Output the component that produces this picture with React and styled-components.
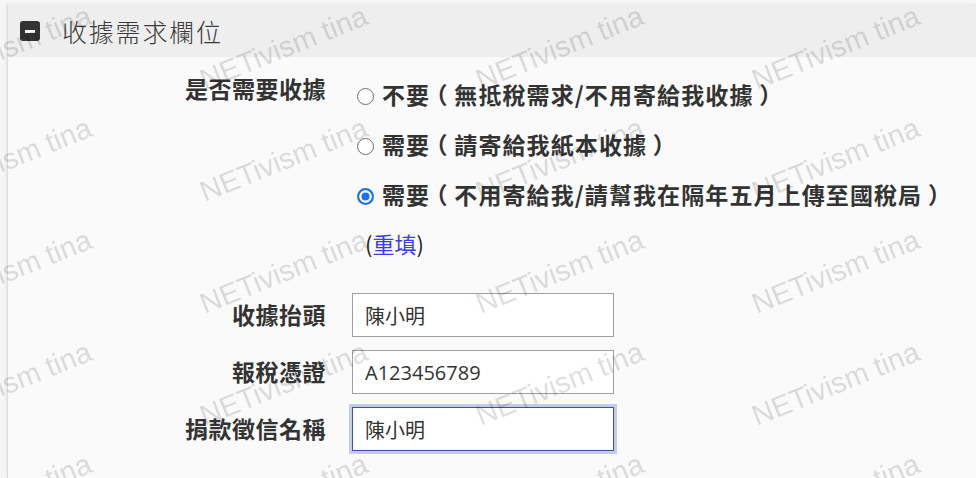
import styled, { createGlobalStyle } from "styled-components";

const GlobalStyle = createGlobalStyle`
  html, body {
    margin: 0;
    background: #f6f6f6;
  }
  * {
    box-sizing: border-box;
  }
`;

const receiptOptions = [
  { id: "none", text: "不要（無抵稅需求/不用寄給我收據）" },
  { id: "paper", text: "需要（請寄給我紙本收據）" },
  { id: "online", text: "需要（不用寄給我/請幫我在隔年五月上傳至國稅局）", checked: true },
];

const textFields = [
  { label: "收據抬頭", value: "陳小明" },
  { label: "報稅憑證", value: "A123456789" },
  { label: "捐款徵信名稱", value: "陳小明", focused: true },
];

// fullwidth brackets drawn centred in their cell, as the Taiwanese fonts do
const withCenteredBrackets = (text) =>
  text
    .split(/([（）])/)
    .map((part, i) =>
      part === "（" || part === "）" ? <Bracket key={i}>{part}</Bracket> : part
    );

const App = () => {
  const marks = Array.from({ length: 20 });

  return (
    <Page>
      <GlobalStyle />
      <Panel>
        <PanelHeader>
          <CollapseIcon />
          <PanelTitle>收據需求欄位</PanelTitle>
        </PanelHeader>

        <PanelBody>
          <FieldRow>
            <FieldLabel $tall>是否需要收據</FieldLabel>
            <RadioList>
              {receiptOptions.map((option) => (
                <RadioOption key={option.id}>
                  <Radio
                    type="radio"
                    name="receipt"
                    defaultChecked={option.checked}
                  />
                  <span>{withCenteredBrackets(option.text)}</span>
                </RadioOption>
              ))}
              <ResetLine>
                (<ResetLink href="#">重填</ResetLink>)
              </ResetLine>
            </RadioList>
          </FieldRow>

          <InputList>
            {textFields.map((field) => (
              <FieldRow key={field.label} $center>
                <FieldLabel>{field.label}</FieldLabel>
                <TextInput
                  type="text"
                  defaultValue={field.value}
                  $focused={field.focused}
                />
              </FieldRow>
            ))}
          </InputList>
        </PanelBody>
      </Panel>

      <Watermark>
        <MarkGrid>
          {marks.map((_, i) => (
            <Mark key={i}>NETivism tina</Mark>
          ))}
        </MarkGrid>
      </Watermark>
    </Page>
  );
};

const Page = styled.div`
  position: relative;
  min-height: 478px;
  overflow: hidden;
  padding: 4px 0 0 7px;
`;

const Panel = styled.section`
  background: #fafafa;
  border-left: 1px solid #dcdcdc;
  box-shadow: -1px 0 3px rgba(0, 0, 0, 0.06);
  min-height: 474px;
`;

const PanelHeader = styled.header`
  display: flex;
  align-items: center;
  gap: 22px;
  height: 53px;
  padding-left: 12px;
  background: #eeeeee;
`;

const CollapseIcon = styled.span`
  position: relative;
  width: 20px;
  height: 20px;
  border-radius: 3px;
  background: #333;

  &::after {
    content: "";
    position: absolute;
    left: 5px;
    top: 9px;
    width: 10px;
    height: 3px;
    background: #fff;
  }
`;

const PanelTitle = styled.h3`
  margin: 0;
  font-family: "Noto Sans CJK TC", "Noto Sans", sans-serif;
  font-size: 25px;
  font-weight: 300;
  letter-spacing: 1.8px;
  color: #3a3a3a;
`;

const PanelBody = styled.div`
  padding-top: 12px;
  display: flex;
  flex-direction: column;
  gap: 26px;
`;

const FieldRow = styled.div`
  display: grid;
  grid-template-columns: 318px 1fr;
  column-gap: 26px;
  align-items: ${({ $center }) => ($center ? "center" : "start")};
`;

const FieldLabel = styled.label`
  text-align: right;
  font-family: "Noto Sans CJK TC", "Noto Sans", sans-serif;
  font-size: 23px;
  font-weight: 700;
  letter-spacing: 0.5px;
  color: #333;
  line-height: ${({ $tall }) => ($tall ? "38px" : "1.2")};
`;

const RadioList = styled.div`
  display: flex;
  flex-direction: column;
`;

const RadioOption = styled.label`
  display: flex;
  align-items: center;
  height: 50px;
  font-family: "Noto Sans CJK TC", "Noto Sans", sans-serif;
  font-size: 23px;
  font-weight: 700;
  letter-spacing: 1.1px;
  color: #333;
  white-space: nowrap;
`;

const Bracket = styled.span`
  display: inline-block;
  width: 1em;
  text-align: center;
  font-feature-settings: "halt";
  letter-spacing: 0;
  margin-right: 1.1px;
`;

const Radio = styled.input`
  appearance: none;
  flex: none;
  width: 17px;
  height: 17px;
  margin: 4px 8px 0 5px;
  border-radius: 50%;
  border: 1px solid #6f6f6f;
  background: #fff;

  &:checked {
    border: 2px solid #1a73f0;
    background: #1a73f0;
    box-shadow: inset 0 0 0 2.5px #fff;
  }
`;

const ResetLine = styled.div`
  height: 48px;
  display: flex;
  align-items: center;
  padding-left: 13px;
  font-family: "Noto Sans CJK TC", "Noto Sans", sans-serif;
  font-size: 22px;
  color: #222;
`;

const ResetLink = styled.a`
  color: #3b3bf5;
  text-decoration: none;
`;

const InputList = styled.div`
  display: flex;
  flex-direction: column;
  gap: 13px;
`;

const TextInput = styled.input`
  width: 262px;
  height: 44px;
  padding: 0 12px;
  font-family: "Open Sans", "Noto Sans CJK TC", sans-serif;
  font-size: 20px;
  color: #333;
  background: #fff;
  border: 1px solid ${({ $focused }) => ($focused ? "#3f4fae" : "#a0a0a0")};
  box-shadow: ${({ $focused }) => ($focused ? "0 0 0 3px #c6cbea" : "none")};
  border-radius: 0;
  outline: none;
`;

const Watermark = styled.div`
  position: absolute;
  inset: 0;
  overflow: hidden;
  pointer-events: none;
`;

const MarkGrid = styled.div`
  position: absolute;
  left: -71px;
  top: -17px;
  display: grid;
  grid-template-columns: repeat(4, 276px);
  grid-auto-rows: 112px;
`;

const Mark = styled.span`
  align-self: end;
  justify-self: start;
  font-family: "Liberation Sans", Arial, sans-serif;
  font-size: 29px;
  line-height: 1;
  white-space: nowrap;
  color: rgba(0, 0, 0, 0.15);
  transform-origin: 0 24.5px;
  transform: rotate(-22deg);
`;

export default App;
